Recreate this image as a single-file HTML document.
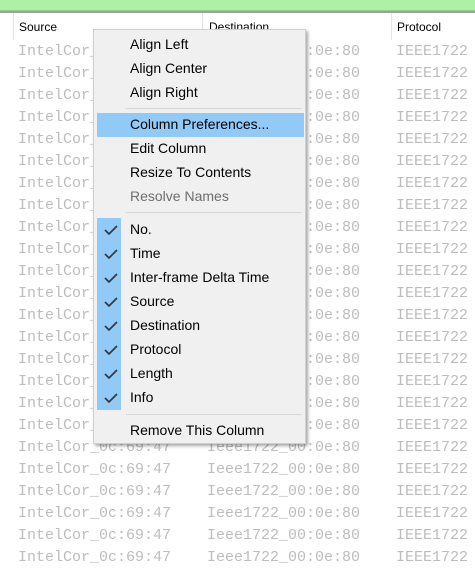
<!DOCTYPE html>
<html><head><style>
body{margin:0;width:475px;height:568px;overflow:hidden;background:#fff;position:relative;font-family:"Liberation Sans",sans-serif}
.green{position:absolute;left:0;top:0;width:475px;height:10px;background:#aef0a5;border-bottom:1px solid #8fd088}
.hline{position:absolute;left:0;top:11px;width:475px;height:2px;background:#a0a0a0}
.hdr{position:absolute;top:13px;height:27px;font-size:12px;color:#000;line-height:28px}
.sep{position:absolute;top:13px;width:1px;height:27px;background:#e5e5e5}
.row{position:absolute;font-family:"Liberation Mono",monospace;font-size:15px;color:#bdbdbd;white-space:pre;line-height:22px}
.menu{position:absolute;left:93px;top:29px;width:213px;height:415px;background:#f0f0f0;border:1px solid #cfcfcf;box-shadow:2px 2px 3px rgba(0,0,0,.35);box-sizing:border-box}
.it{position:absolute;left:36px;font-size:14px;color:#000;line-height:24px;height:24px;white-space:nowrap}
.ms{position:absolute;left:32px;width:176px;height:1px;background:#d7d7d7}
.hl{position:absolute;left:3px;top:83px;width:207px;height:24px;background:#91c9f7}
.strip{position:absolute;left:3px;top:188px;width:24px;height:192px;background:#91c9f7}
</style></head><body>
<div class="green"></div><div class="hline"></div>
<div class="sep" style="left:13px"></div><div class="sep" style="left:202px"></div><div class="sep" style="left:391px"></div>
<div class="hdr" style="left:19px">Source</div>
<div class="hdr" style="left:209px">Destination</div>
<div class="hdr" style="left:397px">Protocol</div>
<div style="position:absolute;left:0;top:41px">
<div class="row" style="left:18px;top:0">IntelCor_0c:69:47<br>IntelCor_0c:69:47<br>IntelCor_0c:69:47<br>IntelCor_0c:69:47<br>IntelCor_0c:69:47<br>IntelCor_0c:69:47<br>IntelCor_0c:69:47<br>IntelCor_0c:69:47<br>IntelCor_0c:69:47<br>IntelCor_0c:69:47<br>IntelCor_0c:69:47<br>IntelCor_0c:69:47<br>IntelCor_0c:69:47<br>IntelCor_0c:69:47<br>IntelCor_0c:69:47<br>IntelCor_0c:69:47<br>IntelCor_0c:69:47<br>IntelCor_0c:69:47<br>IntelCor_0c:69:47<br>IntelCor_0c:69:47<br>IntelCor_0c:69:47<br>IntelCor_0c:69:47<br>IntelCor_0c:69:47<br>IntelCor_0c:69:47</div>
<div class="row" style="left:207px;top:0">Ieee1722_00:0e:80<br>Ieee1722_00:0e:80<br>Ieee1722_00:0e:80<br>Ieee1722_00:0e:80<br>Ieee1722_00:0e:80<br>Ieee1722_00:0e:80<br>Ieee1722_00:0e:80<br>Ieee1722_00:0e:80<br>Ieee1722_00:0e:80<br>Ieee1722_00:0e:80<br>Ieee1722_00:0e:80<br>Ieee1722_00:0e:80<br>Ieee1722_00:0e:80<br>Ieee1722_00:0e:80<br>Ieee1722_00:0e:80<br>Ieee1722_00:0e:80<br>Ieee1722_00:0e:80<br>Ieee1722_00:0e:80<br>Ieee1722_00:0e:80<br>Ieee1722_00:0e:80<br>Ieee1722_00:0e:80<br>Ieee1722_00:0e:80<br>Ieee1722_00:0e:80<br>Ieee1722_00:0e:80</div>
<div class="row" style="left:396px;top:0">IEEE1722<br>IEEE1722<br>IEEE1722<br>IEEE1722<br>IEEE1722<br>IEEE1722<br>IEEE1722<br>IEEE1722<br>IEEE1722<br>IEEE1722<br>IEEE1722<br>IEEE1722<br>IEEE1722<br>IEEE1722<br>IEEE1722<br>IEEE1722<br>IEEE1722<br>IEEE1722<br>IEEE1722<br>IEEE1722<br>IEEE1722<br>IEEE1722<br>IEEE1722<br>IEEE1722</div>
</div>
<div class="menu">
<div class="it" style="top:2px">Align Left</div>
<div class="it" style="top:26px">Align Center</div>
<div class="it" style="top:50px">Align Right</div>
<div class="ms" style="top:78px"></div>
<div class="hl"></div>
<div class="it" style="top:82px">Column Preferences...</div>
<div class="it" style="top:106px">Edit Column</div>
<div class="it" style="top:130px">Resize To Contents</div>
<div class="it" style="top:154px;color:#6d6d6d">Resolve Names</div>
<div class="ms" style="top:182px"></div>
<div class="strip"></div>
<div class="it" style="top:187px">No.</div>
<div class="it" style="top:211px">Time</div>
<div class="it" style="top:235px">Inter-frame Delta Time</div>
<div class="it" style="top:259px">Source</div>
<div class="it" style="top:283px">Destination</div>
<div class="it" style="top:307px">Protocol</div>
<div class="it" style="top:331px">Length</div>
<div class="it" style="top:355px">Info</div>
<svg style="position:absolute;left:10px;top:188px" width="14" height="192" fill="none" stroke="#333" stroke-width="1.6">
<path d="M1 12l4 4 8-8"/><path d="M1 36l4 4 8-8"/><path d="M1 60l4 4 8-8"/><path d="M1 84l4 4 8-8"/><path d="M1 108l4 4 8-8"/><path d="M1 132l4 4 8-8"/><path d="M1 156l4 4 8-8"/><path d="M1 180l4 4 8-8"/>
</svg>
<div class="ms" style="top:384px"></div>
<div class="it" style="top:388px">Remove This Column</div>
</div>
</body></html>
